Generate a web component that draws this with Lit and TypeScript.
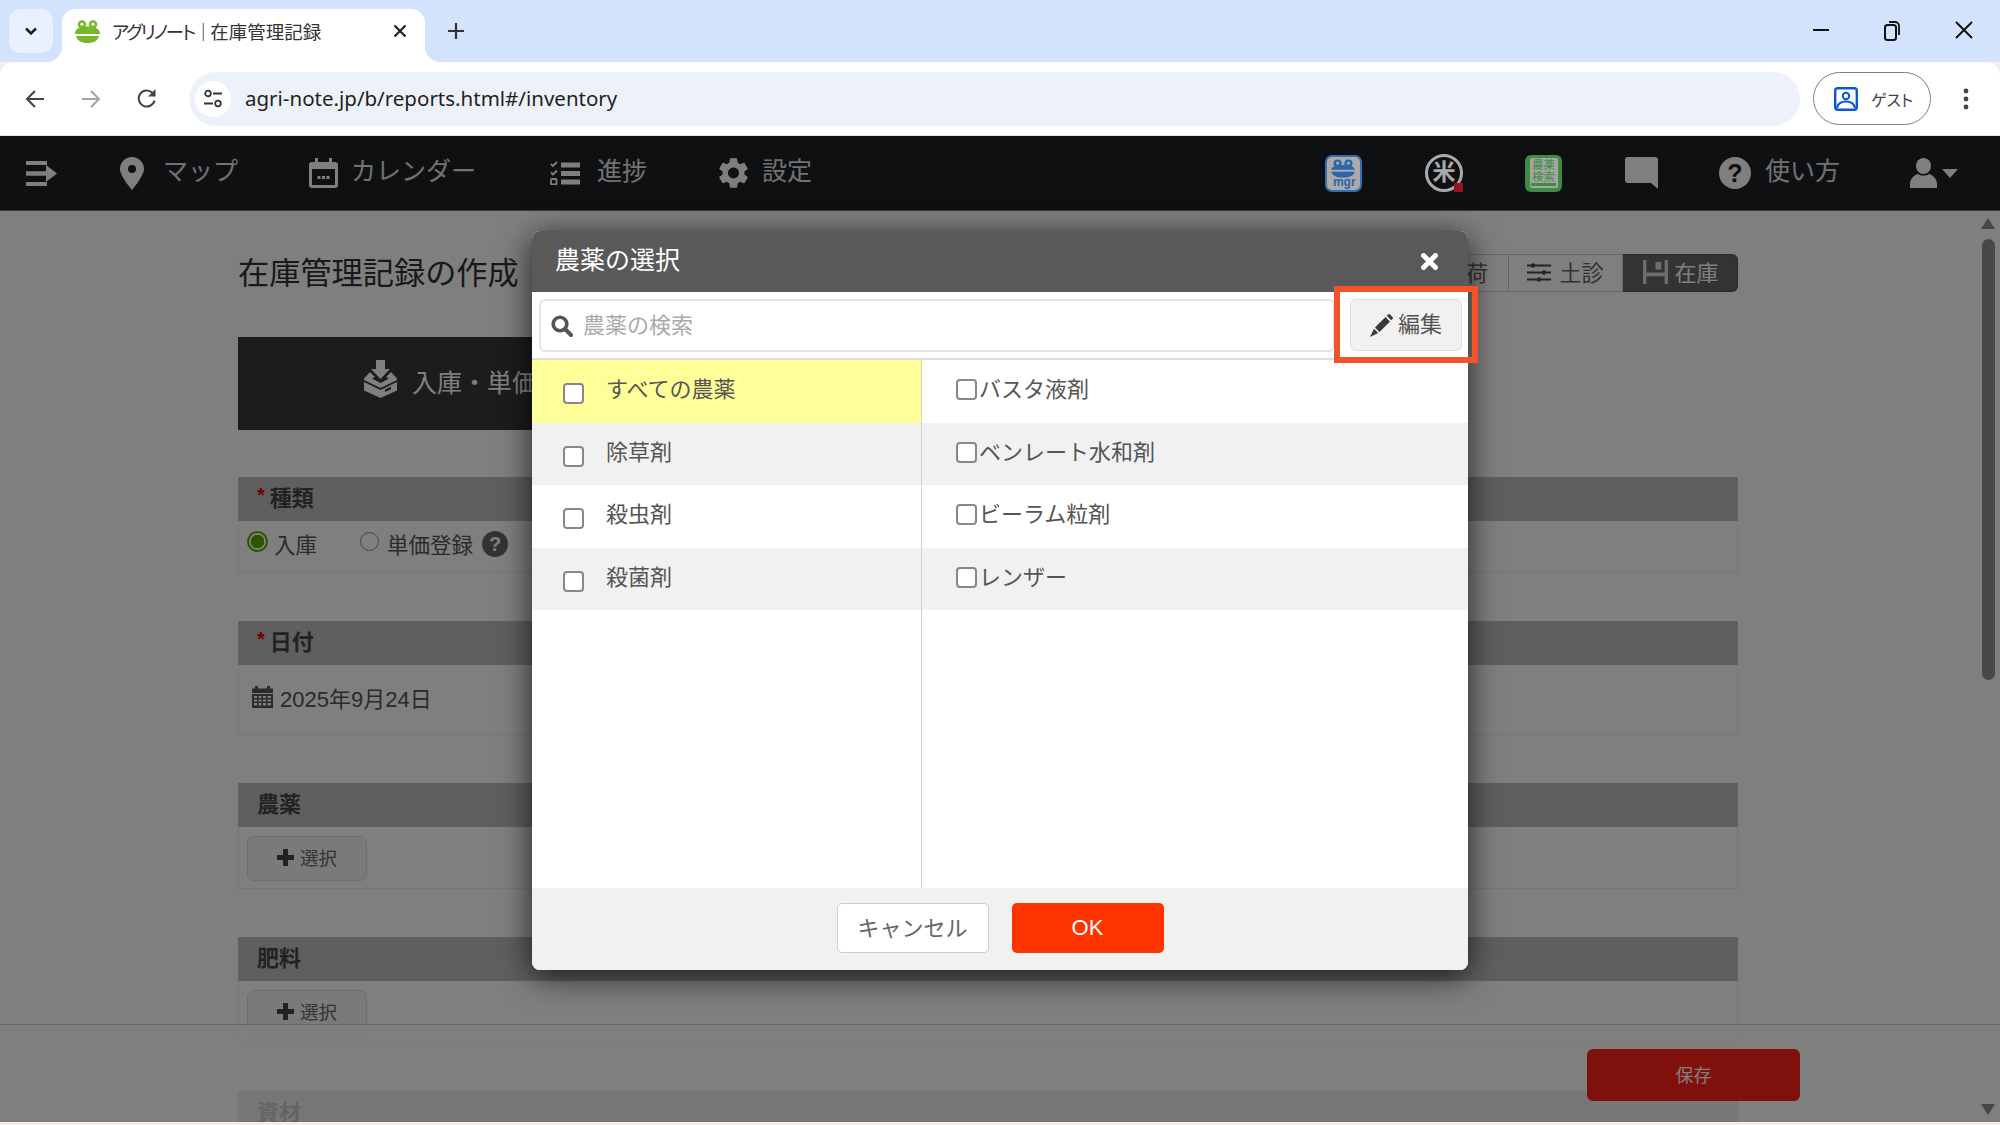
import { html, css, LitElement, svg } from "lit";
import { customElement } from "lit/decorators.js";

const categories = ["すべての農薬", "除草剤", "殺虫剤", "殺菌剤"];
const products = ["バスタ液剤", "ベンレート水和剤", "ビーラム粒剤", "レンザー"];

const gearPath =
  "M19.14 12.94c.04-.3.06-.61.06-.94 0-.32-.02-.64-.07-.94l2.03-1.58c.18-.14.23-.41.12-.61l-1.92-3.32c-.12-.22-.37-.29-.59-.22l-2.39.96c-.5-.38-1.03-.7-1.62-.94l-.36-2.54c-.04-.24-.24-.41-.48-.41h-3.84c-.24 0-.43.17-.47.41l-.36 2.54c-.59.24-1.13.57-1.62.94l-2.39-.96c-.22-.08-.47 0-.59.22L2.74 8.87c-.12.21-.08.47.12.61l2.03 1.58c-.05.3-.09.63-.09.94s.02.64.07.94l-2.03 1.58c-.18.14-.23.41-.12.61l1.92 3.32c.12.22.37.29.59.22l2.39-.96c.5.38 1.03.7 1.62.94l.36 2.54c.05.24.24.41.48.41h3.84c.24 0 .44-.17.47-.41l.36-2.54c.59-.24 1.13-.56 1.62-.94l2.39.96c.22.08.47 0 .59-.22l1.92-3.32c.12-.22.07-.47-.12-.61l-2.01-1.58zM12 15.6c-1.98 0-3.6-1.62-3.6-3.6s1.62-3.6 3.6-3.6 3.6 1.62 3.6 3.6-1.62 3.6-3.6 3.6z";

const icon = (w: number, h: number, vb: string, body: unknown) =>
  html`<svg class="ico" width=${w} height=${h} viewBox=${vb}>${body}</svg>`;

const icons = {
  frog: icon(25, 23, "0 0 25 23", svg`
    <circle cx="7" cy="4.5" r="4.2" fill="#76b82a"/><circle cx="18" cy="4.5" r="4.2" fill="#76b82a"/>
    <circle cx="7" cy="4.2" r="1.6" fill="#fff"/><circle cx="18" cy="4.2" r="1.6" fill="#fff"/>
    <path d="M0 14C0 8 6 6.5 12.5 6.5S25 8 25 14z" fill="#76b82a"/>
    <path d="M1 16h23c-1 4.500-5 7-11.500 7S2 20.500 1 16z" fill="#76b82a"/>`),
  navMenu: icon(31, 25, "0 0 31 25", svg`
    <path d="M0 0h21v4H0zM0 10.500h21v4H0zM0 21h21v4H0z" fill="#fff"/><path d="M20 4l11 8.500-11 8.500z" fill="#fff"/>
    <path d="M0 10.500h22v4H0z" fill="#fff"/>`),
  pin: icon(24, 33, "0 0 24 33", svg`
    <path fill-rule="evenodd" fill="#fff" d="M12 0C5.400 0 0 5.400 0 12c0 7 12 21 12 21s12-14 12-21C24 5.400 18.600 0 12 0zm0 8a4 4 0 1 1 0 8 4 4 0 0 1 0-8z"/>`),
  calendar: icon(29, 30, "0 0 29 30", svg`
    <path fill="#fff" fill-rule="evenodd" d="M6 0h3v4h11V0h3v4h3a3 3 0 0 1 3 3v20a3 3 0 0 1-3 3H3a3 3 0 0 1-3-3V7a3 3 0 0 1 3-3h3zM3 11v16h23V11z"/>
    <path fill="#fff" d="M8.500 18h3v3h-3zM13 18h3v3h-3zM17.500 18h3v3h-3z"/>`),
  tasks: icon(30, 24, "0 0 30 24", svg`
    <path d="M11 1.500h19v5H11zM11 10h19v5H11zM11 18.500h19v5H11z" fill="#fff"/>
    <path d="M1 3l2 2 4-4M1 11.500l2 2 4-4" fill="none" stroke="#fff" stroke-width="1.800"/>
    <rect x="1" y="18" width="5.500" height="5.500" rx="1" fill="none" stroke="#fff" stroke-width="1.800"/>`),
  gear: icon(31, 32, "2 1.500 20 21", svg`<path fill="#fff" d=${gearPath}/>`),
  mgr: html`<span class="app-ico mgr">
    <svg width="30" height="21" viewBox="0 0 30 21">
      <circle cx="9" cy="5" r="4.500" fill="#2a66aa"/><circle cx="21" cy="5" r="4.500" fill="#2a66aa"/>
      <circle cx="9" cy="4.500" r="1.800" fill="#aaa"/><circle cx="21" cy="4.500" r="1.800" fill="#aaa"/>
      <path d="M2 12C2 8 8 6.500 15 6.500S28 8 28 12z" fill="#2a66aa"/><path d="M2 14h26c-1 4-6 6.500-13 6.500S3 18 2 14z" fill="#2a66aa"/>
    </svg><b>mgr</b></span>`,
  rice: html`<span class="app-ico rice"><span>米</span><i></i></span>`,
  book: html`<span class="app-ico book"><span>農薬<br />検索</span><i></i></span>`,
  chat: icon(33, 32, "0 0 33 32", svg`<path fill="#fff" d="M3 0h27a3 3 0 0 1 3 3v29l-7-6H3a3 3 0 0 1-3-3V3a3 3 0 0 1 3-3z"/>`),
  user: icon(27, 30, "0 0 27 30", svg`<ellipse cx="13.500" cy="8" rx="7.500" ry="8" fill="#fff"/><path fill="#fff" d="M0 30v-4c0-5 4-9 8-10 3 2 8 2 11 0 4 1 8 5 8 10v4z"/>`),
  caret: icon(16, 9, "0 0 16 9", svg`<path d="M0 0h16L8 9z" fill="#fff"/>`),
  download: icon(33, 38, "0 0 33 38", svg`
    <path fill="#fff" d="M12 0h9v9h5L16.500 19 7 9h5z"/>
    <path fill="#fff" fill-rule="evenodd" d="M6 12l5 5-3 1.500 8.500 4.500 8.500-4.500-3-1.500 5-5 6 6.500v1.500L16.500 28 0 20v-1.500zM0 22l16.500 8L33 22v8.500L16.500 38 0 30.500zM21 29.500l6-2.800v2.500l-6 2.800z"/>`),
  sliders: icon(24, 19, "0 0 24 19", svg`
    <path d="M0 2.500h24M0 9.500h24M0 16.500h24" stroke="#444" stroke-width="2"/>
    <circle cx="6" cy="2.500" r="2.200" fill="#444"/><circle cx="17" cy="9.500" r="2.200" fill="#444"/><circle cx="12" cy="16.500" r="2.200" fill="#444"/>`),
  floppy: icon(25, 24, "0 0 26 25", svg`
    <path fill="#ddd" fill-rule="evenodd" d="M0 0h26v25H0zM3.500 0v13h19V0zM3.500 17v8h19v-8z"/><path fill="#ddd" d="M13 2h6v8h-6z"/>`),
  miniCal: icon(21, 22, "0 0 21 22", svg`
    <path fill="#555" d="M3 0h3v3H3zM15 0h3v3h-3zM0 2.500h21V7H0z"/>
    <path fill="#555" fill-rule="evenodd" d="M0 8h21v14H0zM2 10v2h3v-2zM6.500 10v2h3v-2zM11 10v2h3v-2zM15.500 10v2h3.500v-2zM2 13.500v2h3v-2zM6.500 13.500v2h3v-2zM11 13.500v2h3v-2zM15.500 13.500v2h3.500v-2zM2 17v2.500h3V17zM6.500 17v2.500h3V17zM11 17v2.500h3V17zM15.500 17v2.500h3.500V17z"/>`),
  plus: icon(17, 17, "0 0 17 17", svg`<path d="M6 0h5v6h6v5h-6v6H6v-6H0V6h6z" fill="#444"/>`),
  search: icon(22, 22, "0 0 22 22", svg`<circle cx="9" cy="9" r="6.800" fill="none" stroke="#555" stroke-width="3.600"/><path d="M14 14l6 6" stroke="#555" stroke-width="4" stroke-linecap="round"/>`),
  pencil: icon(23, 23, "0 0 23 23", svg`
    <path fill="#3a3a3a" d="M5 13.500L15.500 3l4.500 4.500L9.500 18zM16.800 1.800l1.300-1.300a1.500 1.500 0 0 1 2 0l2.400 2.400a1.500 1.500 0 0 1 0 2L21.200 6.200zM4 14.800L8.200 19 0 23z"/>`),
  close: icon(17, 17, "0 0 17 17", svg`<path d="M2.500 2.500l12 12M14.500 2.500l-12 12" stroke="#fff" stroke-width="5" stroke-linecap="round"/>`),
};

@customElement("app-root")
export class AppRoot extends LitElement {
  static styles = css`
    :host {
      display: block;
      width: 2000px;
      height: 1125px;
      overflow: hidden;
      background: #f3efe9;
      font-family: "Liberation Sans", "Noto Sans CJK JP", sans-serif;
      color: #555;
    }
    .ico {
      display: block;
      flex: none;
    }

    /* browser frame */
    .strip {
      height: 62px;
      background: #d3e3fd;
      display: flex;
      font-feature-settings: "palt";
    }
    .tab-list {
      width: 44px;
      height: 44px;
      margin: 9px 0 0 9px;
      border-radius: 12px;
      background: #e9f1fe;
      display: flex;
      align-items: center;
      justify-content: center;
    }
    .tab {
      position: relative;
      width: 363px;
      height: 53px;
      margin: 9px 0 0 9px;
      padding: 0 18px 9px 13px;
      box-sizing: border-box;
      background: #fff;
      border-radius: 14px 14px 0 0;
      display: flex;
      align-items: center;
      font-size: 18.500px;
      color: #333;
    }
    .tab::before,
    .tab::after {
      content: "";
      position: absolute;
      bottom: 0;
      width: 16px;
      height: 16px;
    }
    .tab::before {
      left: -16px;
      background: radial-gradient(circle at 0 0, transparent 16px, #fff 16.5px);
    }
    .tab::after {
      right: -16px;
      background: radial-gradient(circle at 100% 0, transparent 16px, #fff 16.5px);
    }
    .tab-title {
      flex: 1;
      margin-left: 12px;
      white-space: nowrap;
    }
    .tab-title span {
      letter-spacing: -2.200px;
    }
    .new-tab {
      margin: 22px 0 0 22px;
    }
    .win {
      margin-left: auto;
      display: flex;
      gap: 55px;
      padding: 18px 27px 0 0;
    }
    .bar {
      height: 73px;
      background: #fff;
      border-radius: 14px 14px 0 0;
      display: flex;
      align-items: center;
      padding-left: 7px;
      border-bottom: 1px solid #dfe1e5;
      position: relative;
    }
    .bar-btn {
      width: 56px;
      display: flex;
      justify-content: center;
    }
    .omni {
      width: 1611px;
      height: 54px;
      margin-left: 14px;
      border-radius: 27px;
      background: #edf2fa;
      display: flex;
      align-items: center;
      padding-left: 6px;
      box-sizing: border-box;
    }
    .site-ico {
      width: 36px;
      height: 36px;
      border-radius: 50%;
      background: #fff;
      display: flex;
      align-items: center;
      justify-content: center;
    }
    .url {
      margin: 0 0 2px 14px;
      font-family: "Noto Sans", sans-serif;
      font-size: 20.500px;
      color: #1f1f1f;
    }
    .guest {
      width: 118px;
      height: 53px;
      margin-left: 13px;
      box-sizing: border-box;
      border: 1.5px solid #7a7f85;
      border-radius: 27px;
      display: flex;
      align-items: center;
      padding-left: 20px;
      gap: 13px;
      font-size: 16px;
      color: #444;
      font-feature-settings: "palt";
    }
    .dots {
      margin-left: 32px;
    }

    /* page under the dialog */
    .app {
      position: relative;
      height: 986px;
      overflow: hidden;
      background: #fff;
    }
    .nav {
      height: 75px;
      box-sizing: border-box;
      background: #1e2024;
      border-bottom: 1px solid #777;
      display: flex;
      align-items: center;
      color: #e4e4e4;
      font-size: 25px;
      padding-left: 26px;
    }
    .nav-item {
      display: flex;
      align-items: center;
      gap: 13px;
    }
    .nav-item span {
      position: relative;
      top: -4px;
    }
    .app-ico {
      display: block;
      position: relative;
      z-index: 2;
      box-sizing: border-box;
      width: 37px;
      height: 37px;
      flex: none;
    }
    .mgr {
      background: #aaa;
      border: 2px solid #2f70b4;
      border-radius: 7px;
      padding: 2px 0 0 1.500px;
      color: #2a66aa;
      text-align: center;
      line-height: 10px;
      font-size: 12px;
    }
    .mgr svg {
      display: block;
      width: 30px;
      height: 19px;
    }
    .mgr b {
      display: block;
      margin-top: -1px;
    }
    .rice {
      width: 38px;
      height: 38px;
      border: 3px solid #aaa;
      border-radius: 50%;
      color: #aaa;
      font-weight: 700;
      font-size: 23px;
      line-height: 30px;
      text-align: center;
    }
    .rice i {
      position: absolute;
      right: -3px;
      bottom: -3px;
      width: 9px;
      height: 9px;
      background: #96121f;
      border-radius: 1px;
    }
    .book {
      background: #3c8c42;
      border-radius: 6px;
      color: #3c8c42;
    }
    .book::before {
      content: "";
      position: absolute;
      left: 5px;
      top: 3px;
      right: 4px;
      bottom: 4px;
      background: #a5a5a5;
      border-radius: 2px;
    }
    .book span {
      position: absolute;
      left: 7px;
      top: 4px;
      font-size: 11.500px;
      line-height: 12px;
    }
    .book i {
      position: absolute;
      left: 6px;
      right: 6px;
      bottom: 6px;
      height: 2.500px;
      background: #3c8c42;
    }
    .help {
      width: 32px;
      height: 32px;
      border-radius: 50%;
      background: #fff;
      color: #1e2024;
      font-weight: 700;
      font-size: 25px;
      line-height: 32px;
      text-align: center;
    }
    .nav-right {
      margin-left: auto;
      display: flex;
      align-items: center;
      padding-right: 42px;
    }
    .user {
      display: flex;
      align-items: center;
      gap: 5px;
    }

    .page {
      width: 1500px;
      margin-left: 238px;
      padding-top: 43px;
    }
    .title-row {
      height: 38px;
      display: flex;
      align-items: center;
      justify-content: space-between;
    }
    h1 {
      margin: 0 0 5px;
      font-size: 31.200px;
      font-weight: 400;
      color: #333;
      white-space: nowrap;
    }
    .seg {
      display: flex;
      height: 38px;
      font-size: 22px;
      color: #666;
    }
    .seg > div {
      box-sizing: border-box;
      border: 1px solid #ccc;
      border-left: 0;
      padding-bottom: 4px;
      display: flex;
      align-items: center;
      justify-content: center;
      gap: 8px;
    }
    .seg .ico {
      margin-bottom: -2px;
    }
    .seg .soil {
      width: 114px;
    }
    .seg .ship {
      width: 100px;
      padding-left: 35px;
      justify-content: flex-start;
    }
    .seg .stock {
      width: 115px;
      padding-left: 2px;
      gap: 6px;
      background: #666;
      color: #fff;
      border-color: #555;
      border-radius: 0 6px 6px 0;
    }
    .hero {
      height: 93px;
      margin: 45px 0 47px;
      display: grid;
      grid-template-columns: 750px 750px;
    }
    .hero-on {
      background: #383838;
      color: #fff;
      display: flex;
      align-items: center;
      padding-left: 126px;
      gap: 15px;
      font-size: 25px;
      white-space: nowrap;
    }
    .hero-on .ico {
      margin-top: -9px;
    }
    .hero-on span {
      margin-top: -5px;
    }
    .section {
      margin-bottom: 48px;
      border: 1px solid #eee;
      border-top: 0;
    }
    .sec-head {
      height: 44px;
      margin: 0 -1px;
      background: #bebebe;
      padding: 0 0 7px 19px;
      box-sizing: border-box;
      display: flex;
      align-items: center;
      gap: 5px;
      font-size: 22px;
      font-weight: 700;
      color: #444;
    }
    .req {
      color: #e00012;
      font-size: 20px;
    }
    .sec-body {
      font-size: 21.500px;
    }
    .kind {
      height: 51px;
      display: flex;
      align-items: center;
      padding: 0 0 6px 8px;
      box-sizing: border-box;
    }
    .radio {
      width: 19px;
      height: 19px;
      box-sizing: border-box;
      border: 1.500px solid #888;
      border-radius: 50%;
      background: #fff;
      margin-top: -4px;
    }
    .radio.on {
      width: 21px;
      height: 21px;
      border: 2px solid #5fa800;
      background: radial-gradient(circle, #5fa800 6.500px, #fff 7px);
    }
    .radio-text {
      margin-left: 8px;
    }
    .radio-text.first {
      margin: 0 43px 0 6px;
    }
    .qmark {
      width: 26px;
      height: 26px;
      margin-left: 9px;
      border-radius: 50%;
      background: #666;
      color: #fff;
      font-size: 20px;
      font-weight: 700;
      line-height: 26px;
      text-align: center;
    }
    .date {
      height: 69px;
      display: flex;
      align-items: center;
      padding: 0 0 5px 13px;
      box-sizing: border-box;
      gap: 7px;
      font-size: 22px;
    }
    .pick {
      height: 61px;
      padding: 9px 0 0 8px;
      box-sizing: border-box;
    }
    .pick-btn {
      width: 120px;
      height: 45px;
      box-sizing: border-box;
      border: 1px solid #ddd;
      border-radius: 7px;
      background: #f4f4f4;
      padding-bottom: 3px;
      display: flex;
      align-items: center;
      justify-content: center;
      gap: 6px;
      font-size: 18.500px;
      color: #666;
    }

    .stick {
      position: absolute;
      left: 0;
      right: 0;
      bottom: 0;
      height: 98px;
      box-sizing: border-box;
      background: rgba(255, 255, 255, 0.7);
      border-top: 1px solid #ccc;
      padding: 24px 200px 0 0;
      display: flex;
      justify-content: flex-end;
    }
    .save {
      width: 213px;
      height: 52px;
      padding-bottom: 3px;
      box-sizing: border-box;
      border-radius: 6px;
      background: #fe2016;
      color: #fff;
      font-size: 18px;
      display: flex;
      align-items: center;
      justify-content: center;
    }
    .scroll {
      position: absolute;
      right: 0;
      top: 75px;
      bottom: 0;
      width: 24px;
      display: flex;
      flex-direction: column;
      align-items: center;
    }
    .scroll-up,
    .scroll-down {
      width: 0;
      height: 0;
      border: 7.500px solid transparent;
      border-top: 0;
      border-bottom: 11px solid #8e8e8e;
      margin: 7px 0 0;
    }
    .scroll-down {
      transform: rotate(180deg);
      margin: auto 0 7px;
    }
    .thumb {
      width: 13px;
      height: 441px;
      border-radius: 7px;
      background: #8e8e8e;
      margin-top: 10px;
    }
    .veil {
      position: absolute;
      inset: 0;
      z-index: 1;
      background: rgba(0, 0, 0, 0.5);
    }

    /* dialog */
    .modal {
      position: absolute;
      z-index: 2;
      left: 532px;
      top: 95px;
      width: 936px;
      height: 739px;
      display: flex;
      flex-direction: column;
      border-radius: 8px;
      overflow: hidden;
      background: #fff;
      color: #555;
      font-size: 22px;
    }
    .modal-shadow {
      position: absolute;
      z-index: 2;
      left: 532px;
      top: 95px;
      width: 936px;
      height: 739px;
      border-radius: 8px;
      box-shadow: 0 6px 32px rgba(0, 0, 0, 0.75);
    }
    .modal-head {
      height: 61px;
      flex: none;
      background: #595959;
      color: #fff;
      display: flex;
      align-items: center;
      justify-content: space-between;
      padding: 0 30px 0 23px;
      font-size: 25px;
    }
    .modal-head span {
      margin-bottom: 7px;
    }
    .search-row {
      height: 68px;
      flex: none;
      box-sizing: border-box;
      border-bottom: 2px solid #ddd;
      display: flex;
      padding: 7px 6px 0 7px;
      gap: 15px;
    }
    .search {
      flex: 1;
      height: 53px;
      box-sizing: border-box;
      border: 2px solid #e4e4e4;
      border-radius: 6px;
      display: flex;
      align-items: center;
      gap: 10px;
      padding-left: 10px;
      color: #aaa;
    }
    .search span,
    .edit span {
      margin-bottom: 6px;
    }
    .edit {
      width: 112px;
      height: 52px;
      box-sizing: border-box;
      background: #f1f1f1;
      border: 1px solid #ddd;
      border-radius: 6px;
      display: flex;
      align-items: center;
      justify-content: center;
      gap: 5px;
    }
    .lists {
      flex: 1;
      display: flex;
    }
    .cats {
      width: 389px;
      box-sizing: content-box;
      border-right: 1.500px solid #d0d0d0;
    }
    .prods {
      flex: 1;
    }
    .row {
      height: 62.500px;
      display: flex;
      align-items: center;
      box-sizing: border-box;
      padding-bottom: 8px;
    }
    .row:nth-child(even) {
      background: #f1f1f1;
    }
    .cats .row {
      padding-left: 31px;
      gap: 22px;
    }
    .cats .row.sel {
      background: #ffff99;
    }
    .prods .row {
      padding-left: 34px;
      gap: 2px;
    }
    .cb {
      position: relative;
      top: 2.500px;
      width: 21px;
      height: 21px;
      box-sizing: border-box;
      border: 2px solid #888;
      border-radius: 4px;
      background: #fff;
    }
    .cats .cb {
      top: 6.500px;
    }
    .modal-foot {
      height: 82px;
      flex: none;
      background: #f1f1f1;
      display: flex;
      justify-content: center;
      gap: 23px;
      padding-top: 15px;
      box-sizing: border-box;
    }
    .btn {
      width: 152px;
      height: 50px;
      box-sizing: border-box;
      border-radius: 5px;
      display: flex;
      align-items: center;
      justify-content: center;
    }
    .btn.cancel {
      background: #fff;
      border: 1.500px solid #ccc;
      color: #666;
      padding-bottom: 4px;
    }
    .btn.ok {
      background: #ff3300;
      color: #fff;
    }
    .mark {
      position: absolute;
      z-index: 3;
      left: 1334px;
      top: 150px;
      width: 144px;
      height: 77px;
      box-sizing: border-box;
      border: 6px solid #f4522a;
    }
  `;

  private renderBrowser() {
    return html`
      <div class="strip">
        <div class="tab-list">
          <svg class="ico" width="14" height="9" viewBox="0 0 14 9"><path d="M2 1.500l5 5 5-5" fill="none" stroke="#1f1f1f" stroke-width="2.500"/></svg>
        </div>
        <div class="tab">
          ${icons.frog}
          <span class="tab-title"><span>アグリノート｜</span>在庫管理記録</span>
          <svg class="ico" width="14" height="14" viewBox="0 0 14 14"><path d="M1.500 1.500l11 11M12.500 1.500l-11 11" stroke="#1f1f1f" stroke-width="2.200"/></svg>
        </div>
        <svg class="ico new-tab" width="18" height="18" viewBox="0 0 18 18"><path d="M9 1v16M1 9h16" stroke="#333" stroke-width="2.200"/></svg>
        <div class="win">
          <svg class="ico" width="16" height="24" viewBox="0 0 16 24"><path d="M0 12h16" stroke="#111" stroke-width="2"/></svg>
          <svg class="ico" width="16" height="24" viewBox="0 0 16 24"><rect x="1" y="7" width="11" height="15" rx="2.500" fill="none" stroke="#111" stroke-width="2"/><path d="M5 4h6a4 4 0 0 1 4 4v9" fill="none" stroke="#111" stroke-width="1.800"/></svg>
          <svg class="ico" width="18" height="24" viewBox="0 0 18 24"><path d="M1 4l16 16M17 4L1 20" stroke="#111" stroke-width="2"/></svg>
        </div>
      </div>
      <div class="bar">
        <div class="bar-btn">
          <svg class="ico" width="20" height="20" viewBox="0 0 20 20"><path d="M19 10H2M10 2l-8 8 8 8" fill="none" stroke="#444" stroke-width="2"/></svg>
        </div>
        <div class="bar-btn">
          <svg class="ico" width="20" height="20" viewBox="0 0 20 20"><path d="M1 10h17M10 2l8 8-8 8" fill="none" stroke="#a3a3a3" stroke-width="2"/></svg>
        </div>
        <div class="bar-btn">
          <svg class="ico" width="20" height="21" viewBox="0 0 20 21"><path d="M17.500 12.500a8 8 0 1 1-2-7.500l2.500 2.500" fill="none" stroke="#444" stroke-width="2"/><path d="M18.500 1v7.500H11z" fill="#444"/></svg>
        </div>
        <div class="omni">
          <div class="site-ico">
            <svg class="ico" width="20" height="20" viewBox="0 0 20 20"><circle cx="5" cy="4.500" r="2.800" fill="none" stroke="#333" stroke-width="1.800"/><path d="M10 4.500h9M1 14.500h9" stroke="#333" stroke-width="1.800"/><circle cx="15" cy="14.500" r="2.800" fill="none" stroke="#333" stroke-width="1.800"/></svg>
          </div>
          <span class="url">agri-note.jp/b/reports.html#/inventory</span>
        </div>
        <div class="guest">
          <svg class="ico" width="24" height="24" viewBox="0 0 24 24"><rect x="1.200" y="1.200" width="21.600" height="21.600" rx="2.500" fill="none" stroke="#0b57d0" stroke-width="2.400"/><circle cx="12" cy="9" r="3.200" fill="none" stroke="#0b57d0" stroke-width="2"/><path d="M3 21c1-5 5-6.500 9-6.500s8 1.500 9 6.500" fill="none" stroke="#0b57d0" stroke-width="2"/></svg>
          <span>ゲスト</span>
        </div>
        <svg class="ico dots" width="6" height="22" viewBox="0 0 6 22"><circle cx="3" cy="3" r="2.400" fill="#444"/><circle cx="3" cy="11" r="2.400" fill="#444"/><circle cx="3" cy="19" r="2.400" fill="#444"/></svg>
      </div>
    `;
  }

  private renderNav() {
    return html`
      <div class="nav">
        <div style="margin-right:63px">${icons.navMenu}</div>
        <div class="nav-item" style="margin-right:71px;gap:19px">${icons.pin}<span>マップ</span></div>
        <div class="nav-item" style="margin-right:74px">${icons.calendar}<span>カレンダー</span></div>
        <div class="nav-item" style="margin-right:71px;gap:17px">${icons.tasks}<span>進捗</span></div>
        <div class="nav-item">${icons.gear}<span>設定</span></div>
        <div class="nav-right">
          ${icons.mgr}
          <div style="margin-left:63px">${icons.rice}</div>
          <div style="margin-left:62px">${icons.book}</div>
          <div style="margin-left:63px">${icons.chat}</div>
          <div class="nav-item" style="margin-left:61px;gap:14px"><div class="help">?</div><span>使い方</span></div>
          <div class="user" style="margin-left:70px">${icons.user}${icons.caret}</div>
        </div>
      </div>
    `;
  }

  private renderPage() {
    return html`
      <div class="page">
        <div class="title-row">
          <h1>在庫管理記録の作成</h1>
          <div class="seg">
            <div class="ship">出荷</div>
            <div class="soil">${icons.sliders}土診</div>
            <div class="stock">${icons.floppy}在庫</div>
          </div>
        </div>
        <div class="hero">
          <div class="hero-on">${icons.download}<span>入庫・単価登録</span></div>
          <div></div>
        </div>
        <div class="section">
          <div class="sec-head"><span class="req">*</span>種類</div>
          <div class="sec-body kind">
            <span class="radio on"></span><span class="radio-text first">入庫</span>
            <span class="radio"></span><span class="radio-text">単価登録</span>
            <span class="qmark">?</span>
          </div>
        </div>
        <div class="section">
          <div class="sec-head"><span class="req">*</span>日付</div>
          <div class="sec-body date">${icons.miniCal}<span>2025年9月24日</span></div>
        </div>
        <div class="section">
          <div class="sec-head">農薬</div>
          <div class="sec-body pick"><div class="pick-btn">${icons.plus}選択</div></div>
        </div>
        <div class="section">
          <div class="sec-head">肥料</div>
          <div class="sec-body pick"><div class="pick-btn">${icons.plus}選択</div></div>
        </div>
        <div class="section">
          <div class="sec-head">資材</div>
        </div>
      </div>
      <div class="stick"><div class="save">保存</div></div>
      <div class="scroll">
        <div class="scroll-up"></div>
        <div class="thumb"></div>
        <div class="scroll-down"></div>
      </div>
    `;
  }

  private renderModal() {
    return html`
      <div class="modal-shadow"></div>
      <div class="modal">
        <div class="modal-head"><span>農薬の選択</span>${icons.close}</div>
        <div class="search-row">
          <div class="search">${icons.search}<span>農薬の検索</span></div>
          <div class="edit">${icons.pencil}<span>編集</span></div>
        </div>
        <div class="lists">
          <div class="cats">
            ${categories.map(
              (c, i) => html`<div class="row ${i === 0 ? "sel" : ""}"><span class="cb"></span><span>${c}</span></div>`
            )}
          </div>
          <div class="prods">
            ${products.map((p) => html`<div class="row"><span class="cb"></span><span>${p}</span></div>`)}
          </div>
        </div>
        <div class="modal-foot">
          <div class="btn cancel">キャンセル</div>
          <div class="btn ok">OK</div>
        </div>
      </div>
      <div class="mark"></div>
    `;
  }

  render() {
    return html`
      ${this.renderBrowser()}
      <div class="app">
        ${this.renderNav()} ${this.renderPage()}
        <div class="veil"></div>
        ${this.renderModal()}
      </div>
    `;
  }
}
